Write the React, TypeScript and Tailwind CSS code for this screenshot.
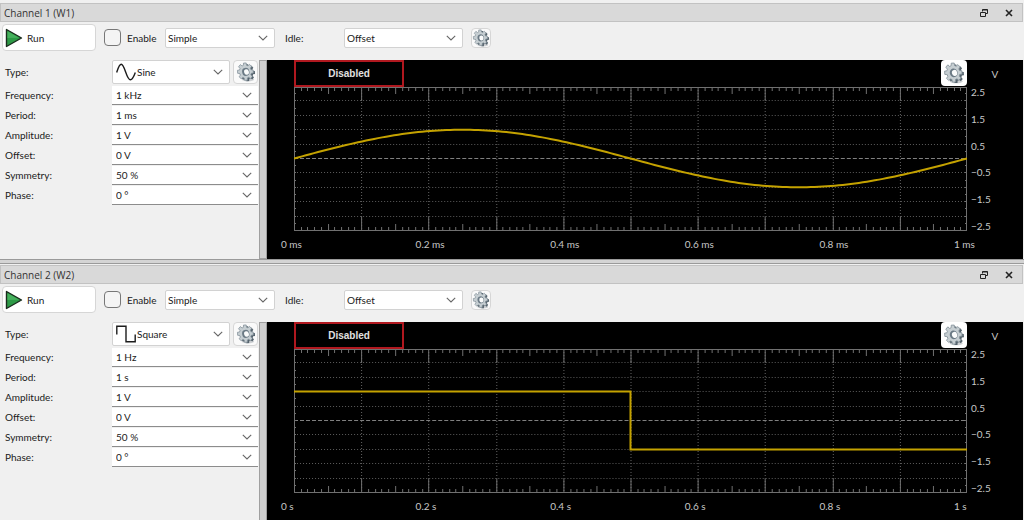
import type { ReactNode } from 'react';

type Wave = 'sine' | 'square';

interface Channel {
  id: string;
  title: string;
  wave: Wave;
  typeLabel: string;
  params: { name: string; value: string }[];
  ticks: string[];
}

const channels: Channel[] = [
  {
    id: 'w1',
    title: 'Channel 1 (W1)',
    wave: 'sine',
    typeLabel: 'Sine',
    params: [
      { name: 'Frequency', value: '1 kHz' },
      { name: 'Period', value: '1 ms' },
      { name: 'Amplitude', value: '1 V' },
      { name: 'Offset', value: '0 V' },
      { name: 'Symmetry', value: '50 %' },
      { name: 'Phase', value: '0 °' },
    ],
    ticks: ['0 ms', '0.2 ms', '0.4 ms', '0.6 ms', '0.8 ms', '1 ms'],
  },
  {
    id: 'w2',
    title: 'Channel 2 (W2)',
    wave: 'square',
    typeLabel: 'Square',
    params: [
      { name: 'Frequency', value: '1 Hz' },
      { name: 'Period', value: '1 s' },
      { name: 'Amplitude', value: '1 V' },
      { name: 'Offset', value: '0 V' },
      { name: 'Symmetry', value: '50 %' },
      { name: 'Phase', value: '0 °' },
    ],
    ticks: ['0 s', '0.2 s', '0.4 s', '0.6 s', '0.8 s', '1 s'],
  },
];

const volts = ['2.5', '1.5', '0.5', '−0.5', '−1.5', '−2.5'];

// Plot area in its own units, ten divisions each way
const W = 672;
const H = 144;

function gearPath(cx: number, cy: number, outer: number, inner: number, teeth: number) {
  const pts: string[] = [];
  const step = (Math.PI * 2) / teeth;
  for (let i = 0; i < teeth; i++) {
    const a = i * step + 0.2;
    [
      [inner, -0.34],
      [outer, -0.22],
      [outer, 0.22],
      [inner, 0.34],
    ].forEach(([r, o]) => {
      const x = cx + r * 0.9 * Math.cos(a + o * step);
      const y = cy + r * Math.sin(a + o * step);
      pts.push(`${x.toFixed(2)} ${y.toFixed(2)}`);
    });
  }
  return `M${pts.join('L')}Z`;
}

function GearIcon({ className }: { className: string }) {
  return (
    <svg viewBox="0 0 20 20" className={className} aria-hidden="true">
      <ellipse cx="12" cy="17.6" rx="6" ry="1.8" fill="#b9bec2" opacity="0.7" />
      <g transform="rotate(-14 10 10)">
        <path d={gearPath(11.1, 11, 8.6, 6.6, 8)} fill="#56646e" />
        <path d={gearPath(9.5, 9.5, 8.8, 6.6, 8)} fill="#c6ced2" stroke="#84919a" strokeWidth="0.7" />
        <ellipse cx="9.8" cy="9.8" rx="3.6" ry="4" fill="#6b7a85" />
        <ellipse cx="10.5" cy="10.1" rx="2.4" ry="2.8" fill="#fafbfb" />
      </g>
    </svg>
  );
}

function WaveIcon({ wave }: { wave: Wave }) {
  return (
    <svg viewBox="0 0 20 18" className="h-[18px] w-5" fill="none" stroke="#1c1c1c" strokeWidth="1.4" aria-hidden="true">
      {wave === 'sine' ? (
        <path d="M.7 9.5C2.2 5 3.2 1.2 5.2 1.2c3.6 0 5.2 15.6 9.2 15.6 2.2 0 3.4-3.3 4.9-7.3" />
      ) : (
        <path d="M.8 9.5V1.2H10v15.6h9.2V9.5" />
      )}
    </svg>
  );
}

function Combo({
  id,
  label,
  value,
  box,
  pad = 'pl-1',
  children,
}: {
  id: string;
  label?: string;
  value: string;
  box: string;
  pad?: string;
  children?: ReactNode;
}) {
  return (
    <div className={`relative bg-white ${box}`}>
      <select
        id={id}
        aria-label={label}
        defaultValue={value}
        className={`h-full w-full appearance-none bg-transparent pr-6 outline-none ${pad}`}
      >
        <option>{value}</option>
      </select>
      {children}
      <span className="pointer-events-none absolute inset-y-0 right-1.5 flex items-center">
        <svg viewBox="0 0 10 6" className="h-1.5 w-2.5" fill="none" stroke="#666" strokeWidth="1.1" aria-hidden="true">
          <path d="M.8.8L5 5 9.200.8" />
        </svg>
      </span>
    </div>
  );
}

function TitleBar({ title }: { title: string }) {
  return (
    <header className="mr-px flex h-[19px] items-center border border-[#c2c2c2] bg-[#d9d9d9] pr-[9px] pl-[3px]">
      <h2 className="flex-1 font-['Open_Sans',sans-serif] text-[#333]">{title}</h2>
      <button type="button" aria-label="Float" className="mr-[17px]">
        <svg viewBox="0 0 8 8" className="size-2" fill="none" stroke="#222" aria-hidden="true">
          <path d="M2.5 2.5v-2h5v4h-2M.5 3.5h5v4h-5zM2.5 1h5" />
        </svg>
      </button>
      <button type="button" aria-label="Close">
        <svg viewBox="0 0 8 8" className="size-2" stroke="#222" strokeWidth="1.6" aria-hidden="true">
          <path d="M1 1l6 6M7 1L1 7" />
        </svg>
      </button>
    </header>
  );
}

function Toolbar({ id }: { id: string }) {
  const field = 'h-5 rounded-xs border border-[#d2d2d2]';
  return (
    <div className="flex items-center pt-0.5 pb-[9px] pl-0.5">
      <button
        type="button"
        className="flex h-[27px] w-[94px] items-center gap-1 rounded-sm border border-[#d6d6d6] bg-white pl-0.5"
      >
        <svg viewBox="0 0 18 20" className="h-5 w-[18px]" aria-hidden="true">
          <path d="M1.5 1.5L16.5 10l-15 8.5z" fill="#2d9a46" stroke="#1a2b1d" strokeWidth="1.4" strokeLinejoin="round" />
          <path d="M2.5 3.2L14 9.7l-11.5.3z" fill="#46b15d" />
        </svg>
        Run
      </button>
      <label className="ml-2 flex w-[61px] items-center gap-1.5">
        <input
          type="checkbox"
          className="size-[17px] appearance-none rounded-sm border border-[#777] bg-[#f4f4f4] checked:bg-[#2d9a46]"
        />
        Enable
      </label>
      <Combo id={`${id}-mode`} label="Mode" value="Simple" box={`w-[110px] ${field}`} pad="pl-0.5" />
      <label htmlFor={`${id}-idle`} className="ml-2.5 w-[59px]">
        Idle:
      </label>
      <Combo id={`${id}-idle`} value="Offset" box={`w-[119px] ${field}`} pad="pl-0.5" />
      <button
        type="button"
        aria-label="Channel options"
        className="ml-2 flex size-5 items-center justify-center rounded-sm border border-[#d6d6d6] bg-[#fafafa]"
      >
        <GearIcon className="size-[18px]" />
      </button>
    </div>
  );
}

function Settings({ channel }: { channel: Channel }) {
  return (
    <form className="w-[259px] shrink-0 pr-px pl-[5px]">
      <div className="mb-px flex h-6 items-center">
        <label htmlFor={`${channel.id}-type`} className="w-[107px]">
          Type:
        </label>
        <Combo
          id={`${channel.id}-type`}
          value={channel.typeLabel}
          box="mr-[3px] h-6 flex-1 rounded-xs border border-[#d2d2d2]"
          pad="pl-6"
        >
          <span className="pointer-events-none absolute top-0.5 left-[3px]">
            <WaveIcon wave={channel.wave} />
          </span>
        </Combo>
        <button
          type="button"
          aria-label="Waveform options"
          className="flex h-6 w-[25px] items-center justify-center rounded-sm border border-[#d6d6d6] bg-[#fafafa]"
        >
          <GearIcon className="size-5" />
        </button>
      </div>
      {channel.params.map((p) => (
        <div key={p.name} className="flex h-5 items-center">
          <label htmlFor={`${channel.id}-${p.name}`} className="w-[107px]">
            {p.name}:
          </label>
          <Combo
            id={`${channel.id}-${p.name}`}
            value={p.value}
            box="h-[19px] flex-1 border-b border-[#8c8c8c]"
          />
        </div>
      ))}
    </form>
  );
}

function Plot({ wave }: { wave: Wave }) {
  const grid: ReactNode[] = [];
  for (let i = 1; i < 10; i++) {
    const x = Math.round((i * W) / 10) + 0.5;
    const y = Math.round((i * H) / 10) - 0.5;
    grid.push(
      <path key={`v${i}`} d={`M${x} 0V${H}`} stroke="#646464" strokeDasharray="1 2" />,
      <path
        key={`h${i}`}
        d={`M0 ${y}H${W}`}
        stroke={i === 5 ? '#808080' : '#5c5c5c'}
        strokeDasharray={i === 5 ? '4 2' : '1 2'}
      />,
    );
  }

  let ticks = '';
  for (let i = 1; i < 100; i++) {
    const x = Math.round((i * W) / 100) + 0.5;
    const len = i % 10 === 0 ? 14 : i % 5 === 0 ? 7 : 4;
    ticks += `M${x} 0v${len}M${x} ${H}v-${len}`;
  }
  for (let i = 1; i < 20; i++) {
    const y = Math.round((i * H) / 20) - 0.5;
    ticks += `M0 ${y}h2M${W} ${y}h-2`;
  }

  let trace = `M0 42.5H336V100.5H${W}`;
  if (wave === 'sine') {
    trace = 'M0 71.5';
    for (let x = 4; x <= W; x += 4) {
      trace += `L${x} ${(71.5 - 28.8 * Math.sin((x / W) * Math.PI * 2)).toFixed(2)}`;
    }
  }

  return (
    <svg
      viewBox={`0 0 ${W} ${H}`}
      preserveAspectRatio="none"
      className="h-36 w-full"
      fill="none"
      role="img"
      aria-label={`${wave} preview`}
    >
      {grid}
      <path d={ticks} stroke="#707070" />
      <rect x="0.5" y="0.5" width={W - 1} height={H - 1} stroke="#707070" />
      <path d={trace} stroke="#c4a200" strokeWidth="2" />
    </svg>
  );
}

function Scope({ channel }: { channel: Channel }) {
  return (
    <section className="mr-px flex min-w-0 flex-1 bg-black pl-[27px] text-[#c8c8c8]">
      <div className="min-w-0 flex-1">
        <div className="flex h-[27px] justify-between">
          <div className="flex w-[110px] items-center justify-center border-2 border-[#b0181f] font-['Liberation_Sans',sans-serif] font-bold text-[#e0e0e0]">
            Disabled
          </div>
          <button
            type="button"
            aria-label="Plot options"
            className="flex size-[26px] items-center justify-center rounded-sm bg-white"
          >
            <GearIcon className="size-[22px]" />
          </button>
        </div>
        <Plot wave={channel.wave} />
        <div className="-mx-[13px] flex h-[26px] items-center justify-between">
          {channel.ticks.map((t) => (
            <span key={t} className="w-[26px] whitespace-nowrap">
              {t}
            </span>
          ))}
        </div>
      </div>
      <div className="w-14">
        <div className="flex h-[27px] items-center justify-center">V</div>
        <div className="flex h-36 flex-col justify-between pl-1 leading-[10px]">
          {volts.map((v) => (
            <span key={v}>{v}</span>
          ))}
        </div>
      </div>
    </section>
  );
}

function ChannelPanel({ channel }: { channel: Channel }) {
  return (
    <article>
      <TitleBar title={channel.title} />
      <Toolbar id={channel.id} />
      <div className="flex h-[199px]">
        <Settings channel={channel} />
        <div className="w-2 shrink-0 border border-[#9f9f9f] bg-[#cfcfcf]" />
        <Scope channel={channel} />
      </div>
    </article>
  );
}

export default function App() {
  return (
    <main className="h-screen overflow-hidden bg-[#f0f0f0] pt-[3px] font-['Lato',sans-serif] text-[10px] leading-4 text-[#1a1a1a]">
      <ChannelPanel channel={channels[0]} />
      <div className="mb-px h-[5px] border-y border-[#9a9a9a] bg-[#d4d4d4]" />
      <ChannelPanel channel={channels[1]} />
    </main>
  );
}
